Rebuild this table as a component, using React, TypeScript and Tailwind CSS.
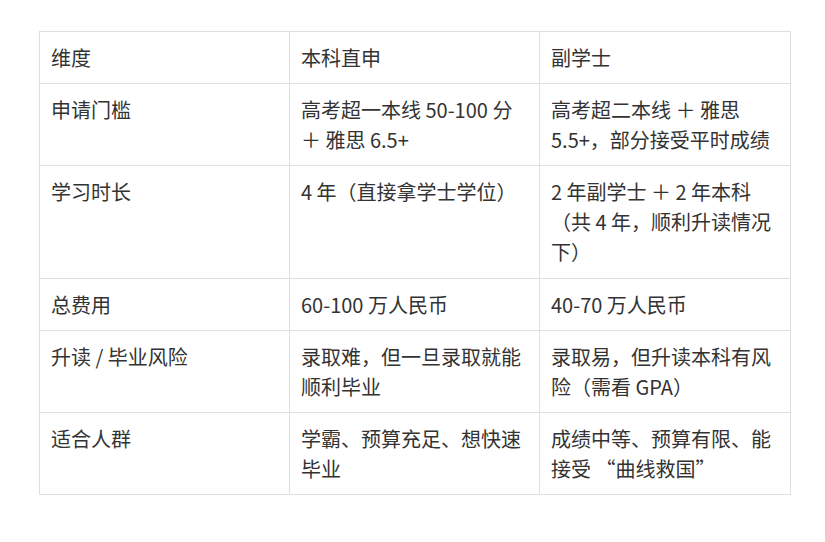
import React from "react";

const rows: string[][] = [
  ["维度", "本科直申", "副学士"],
  ["申请门槛", "高考超一本线 50-100 分 ＋ 雅思 6.5+", "高考超二本线 ＋ 雅思 5.5+，部分接受平时成绩"],
  ["学习时长", "4 年（直接拿学士学位）", "2 年副学士 ＋ 2 年本科（共 4 年，顺利升读情况下）"],
  ["总费用", "60-100 万人民币", "40-70 万人民币"],
  ["升读 / 毕业风险", "录取难，但一旦录取就能顺利毕业", "录取易，但升读本科有风险（需看 GPA）"],
  ["适合人群", "学霸、预算充足、想快速毕业", "成绩中等、预算有限、能接受 “曲线救国”"],
];

export default function App() {
  return (
    <div className="w-[825px] h-[542px] bg-white pt-[31px] pl-[39px]" style={{ fontFamily: '"Noto Sans CJK SC", "Noto Sans", sans-serif' }}>
      <table className="border-collapse w-[751px] table-fixed text-[20px] leading-[30px] text-[#333333]">
        <colgroup>
          <col className="w-[250px]" />
          <col className="w-[250px]" />
          <col className="w-[251px]" />
        </colgroup>
        <tbody>
          {rows.map((r, i) => (
            <tr key={i}>
              {r.map((c, j) => (
                <td
                  key={j}
                  className={
                    i === 2
                      ? "border border-[#dfdfdf] pl-[11px] pr-[12px] pt-[11px] pb-[11px] align-top"
                      : "border border-[#dfdfdf] pl-[11px] pr-[12px] pt-[11px] pb-[10px] align-top"
                  }
                >
                  {c}
                </td>
              ))}
            </tr>
          ))}
        </tbody>
      </table>
    </div>
  );
}
